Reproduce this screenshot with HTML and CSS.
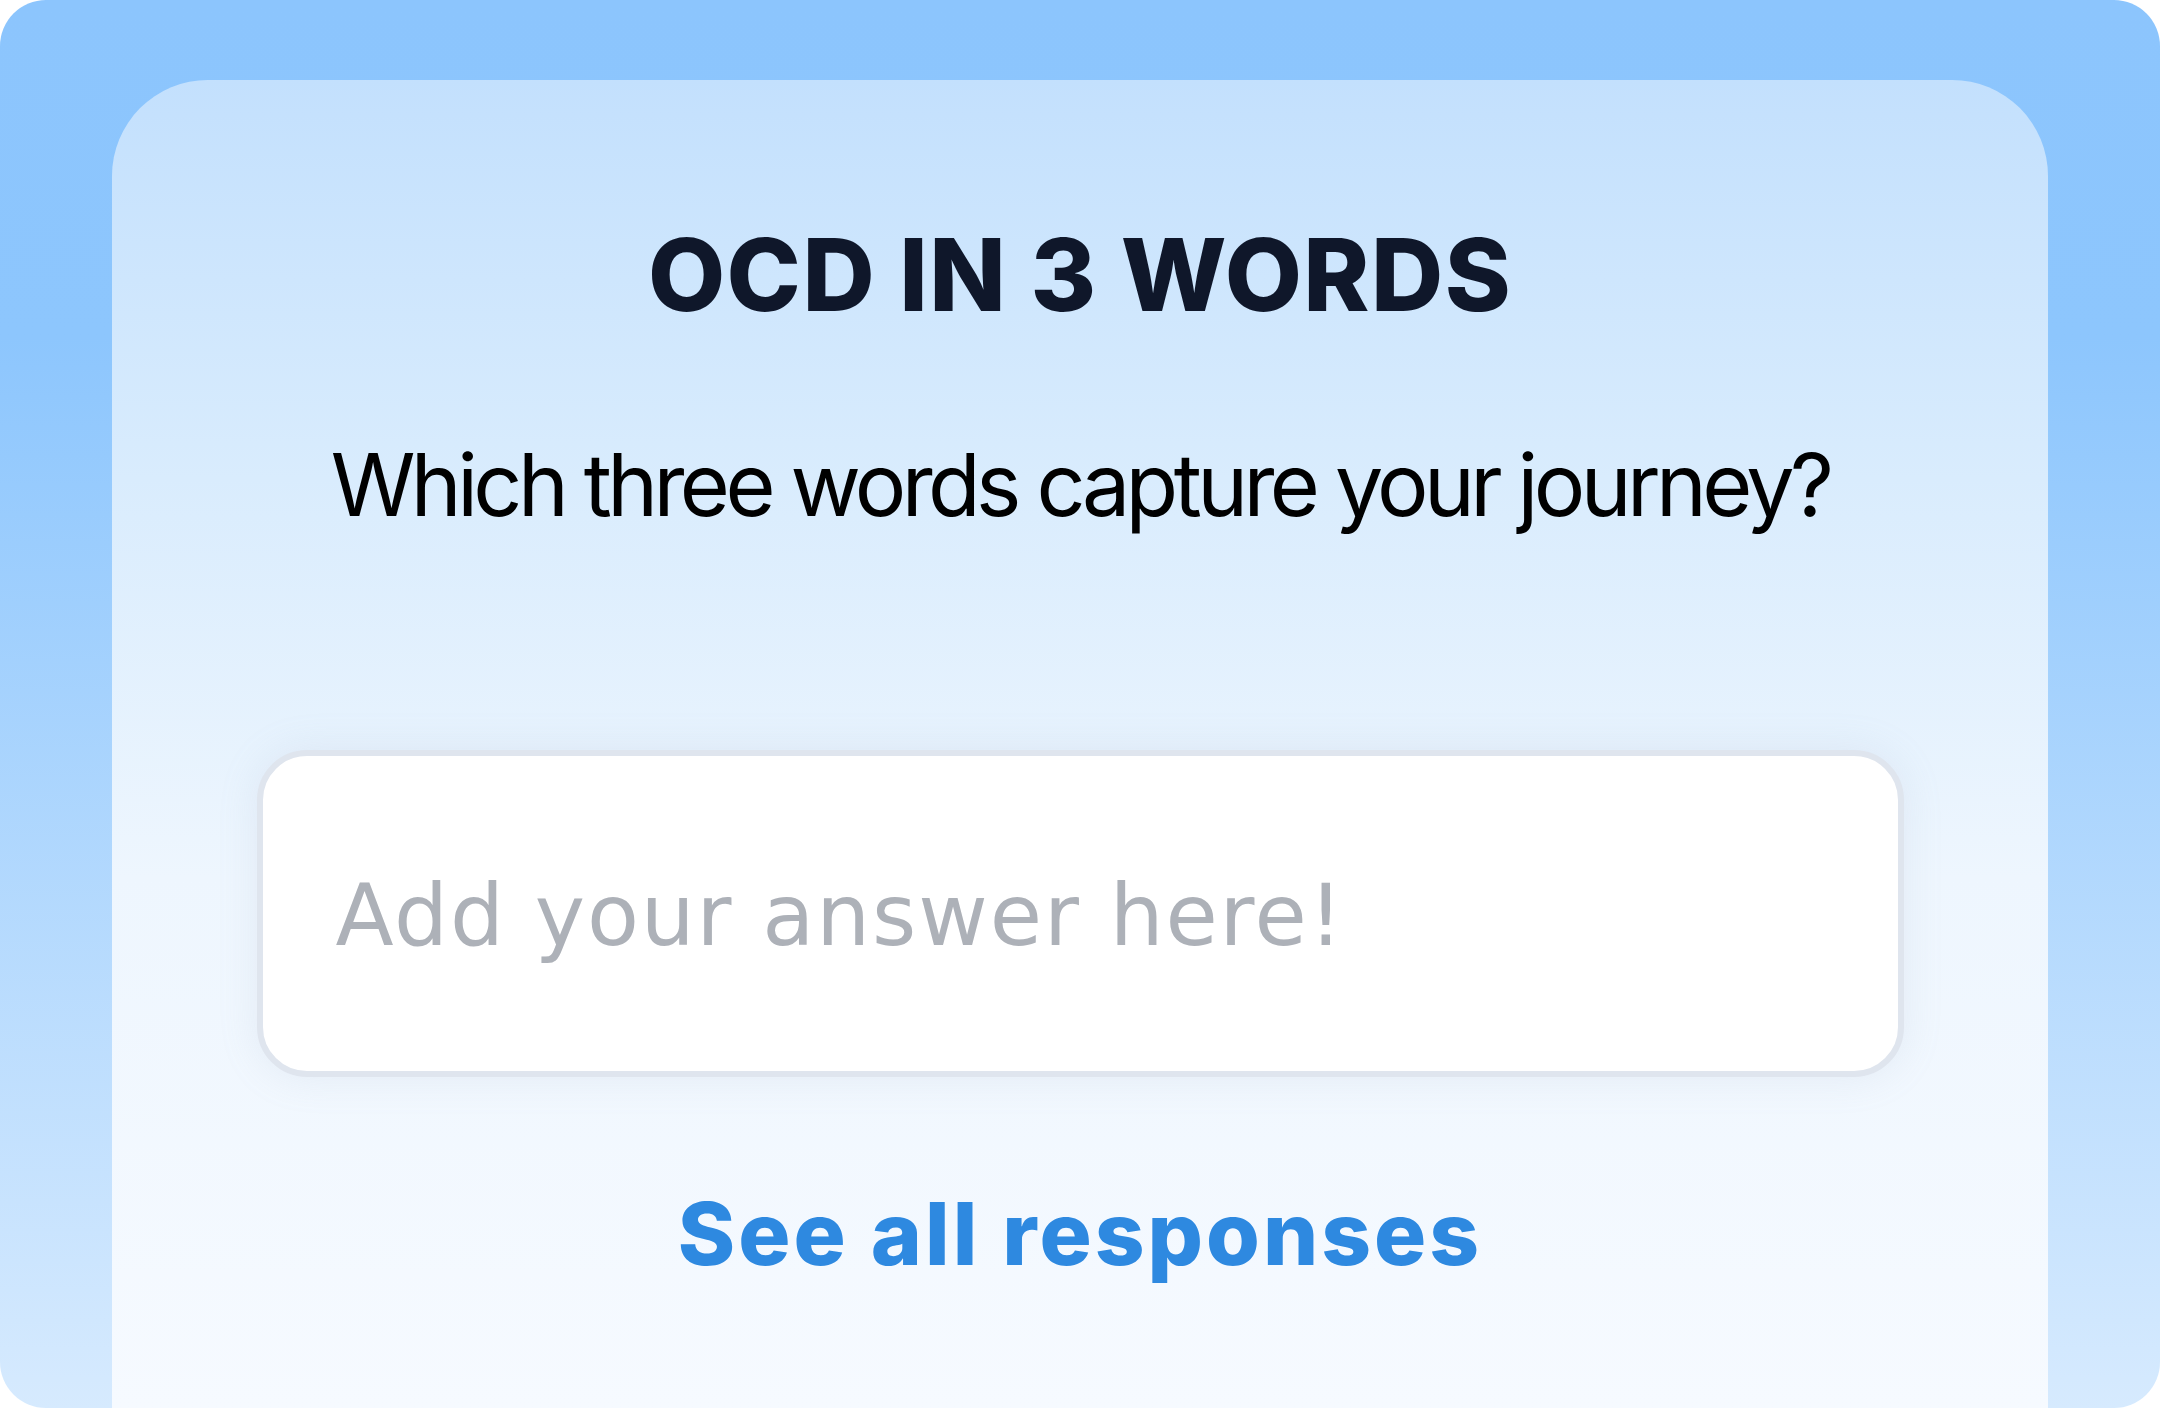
FILE: index.html
```html
<!DOCTYPE html>
<html lang="en">
<head>
<meta charset="utf-8">
<title>OCD in 3 words</title>
<link rel="stylesheet" href="styles.css">
</head>
<body>
<div class="frame">
  <main class="card">
    <h1 class="title">OCD IN 3 WORDS</h1>
    <p class="question">Which three words capture your journey?</p>
    <input class="answer" type="text" placeholder="Add your answer here!">
    <a class="responses" href="#">See all responses</a>
  </main>
</div>
</body>
</html>
```

FILE: styles.css
```css
html, body {
  margin: 0;
  padding: 0;
  background: #ffffff;
}

.frame {
  box-sizing: border-box;
  width: 100%;
  height: 100vh;
  border-radius: 46px;
  overflow: hidden;
  background: linear-gradient(to bottom, #8cc5fd 0%, #8dc6fd 24%, #d6eafe 100%);
  padding: 80px 112px 0;
  display: flex;
  flex-direction: column;
}

.card {
  flex: 1;
  border-radius: 96px 96px 0 0;
  background: linear-gradient(to bottom, #c3e0fd 0%, #d9ecfd 30%, #eef6fe 60%, #f6faff 100%);
  display: flex;
  flex-direction: column;
  align-items: center;
  padding-top: 145px;
}

.title {
  margin: 0;
  font-family: "Inter", "Noto Sans", sans-serif;
  font-weight: 800;
  font-size: 100px;
  line-height: 1;
  color: #0f172a;
  letter-spacing: 1.4px;
}

.question {
  margin: 117px 0 0;
  font-family: "Inter", "Noto Sans", sans-serif;
  font-weight: 400;
  font-size: 86px;
  line-height: 1;
  letter-spacing: -4.6px;
  color: #000000;
}

.answer {
  box-sizing: border-box;
  margin-top: 222px;
  width: 1647px;
  height: 327px;
  border: 6px solid #dfe5ee;
  border-radius: 50px;
  background: #ffffff;
  padding: 4px 0 0 73px;
  font-family: "DejaVu Sans", "Inter", sans-serif;
  font-weight: 400;
  font-size: 85px;
  letter-spacing: 1.9px;
  color: #111827;
  box-shadow: 0 0 40px rgba(148, 163, 184, 0.14);
  outline: none;
}

.answer::placeholder {
  color: #adb1b8;
  opacity: 1;
}

.responses {
  margin-top: 113px;
  font-family: "Inter", "Noto Sans", sans-serif;
  font-weight: 800;
  font-size: 87px;
  line-height: 1;
  letter-spacing: 3px;
  color: #2e89e0;
  text-decoration: none;
}
```
